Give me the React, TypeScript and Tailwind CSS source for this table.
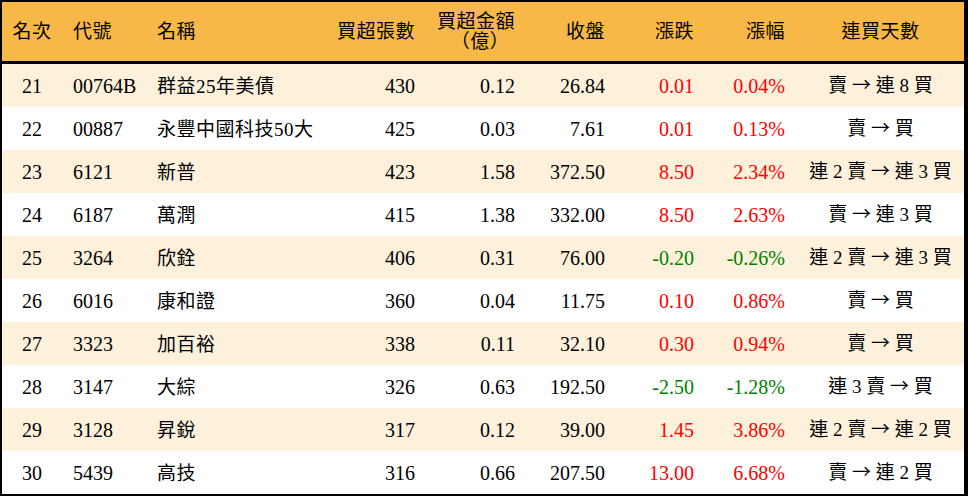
type Row = {
  rank: number;
  code: string;
  name: string;
  lots: number;
  amount: string;
  close: string;
  change: string;
  pct: string;
  streak: string;
};

const rows: Row[] = [
  { rank: 21, code: '00764B', name: '群益25年美債', lots: 430, amount: '0.12', close: '26.84', change: '0.01', pct: '0.04%', streak: '賣 → 連 8 買' },
  { rank: 22, code: '00887', name: '永豐中國科技50大', lots: 425, amount: '0.03', close: '7.61', change: '0.01', pct: '0.13%', streak: '賣 → 買' },
  { rank: 23, code: '6121', name: '新普', lots: 423, amount: '1.58', close: '372.50', change: '8.50', pct: '2.34%', streak: '連 2 賣 → 連 3 買' },
  { rank: 24, code: '6187', name: '萬潤', lots: 415, amount: '1.38', close: '332.00', change: '8.50', pct: '2.63%', streak: '賣 → 連 3 買' },
  { rank: 25, code: '3264', name: '欣銓', lots: 406, amount: '0.31', close: '76.00', change: '-0.20', pct: '-0.26%', streak: '連 2 賣 → 連 3 買' },
  { rank: 26, code: '6016', name: '康和證', lots: 360, amount: '0.04', close: '11.75', change: '0.10', pct: '0.86%', streak: '賣 → 買' },
  { rank: 27, code: '3323', name: '加百裕', lots: 338, amount: '0.11', close: '32.10', change: '0.30', pct: '0.94%', streak: '賣 → 買' },
  { rank: 28, code: '3147', name: '大綜', lots: 326, amount: '0.63', close: '192.50', change: '-2.50', pct: '-1.28%', streak: '連 3 賣 → 買' },
  { rank: 29, code: '3128', name: '昇銳', lots: 317, amount: '0.12', close: '39.00', change: '1.45', pct: '3.86%', streak: '連 2 賣 → 連 2 買' },
  { rank: 30, code: '5439', name: '高技', lots: 316, amount: '0.66', close: '207.50', change: '13.00', pct: '6.68%', streak: '賣 → 連 2 買' },
];

const cols = 'grid grid-cols-[60px_83px_185px_97px_100px_90px_89px_91px_1fr] items-center';

// arrow needs the CJK font so it comes out full width like the original
function Streak({ text }: { text: string }) {
  const parts = text.split('→');
  return (
    <div className="text-center whitespace-pre text-[19px]">
      {parts[0]}
      <span className="font-['Noto_Sans_CJK_TC',sans-serif]">→</span>
      {parts[1]}
    </div>
  );
}

export default function App() {
  return (
    <div className="w-[968px] h-[496px] bg-white text-black text-[20px] font-['Liberation_Serif','Noto_Sans_CJK_TC',serif]">
      <div className="h-full border-t-2 border-l-2 border-b-2 border-r-4 border-black flex flex-col">
        {/* header */}
        <div className={`${cols} h-[62px] shrink-0 bg-[#f8b848] border-b-[3px] border-black text-[19px] leading-[19px] tracking-[0.5px]`}>
          <div className="text-center">名次</div>
          <div className="pl-[11px]">代號</div>
          <div className="pl-[12px]">名稱</div>
          <div className="text-right pr-[12px]">買超張數</div>
          <div className="flex justify-end pr-[12px]">
            <div className="text-center leading-[20px]">
              <div>買超金額</div>
              <div className="pl-[8px]">（億）</div>
            </div>
          </div>
          <div className="text-right pr-[12px]">收盤</div>
          <div className="text-right pr-[12px]">漲跌</div>
          <div className="text-right pr-[12px]">漲幅</div>
          <div className="text-center">連買天數</div>
        </div>
        {/* rows */}
        {rows.map((r, i) => {
          const down = r.change.startsWith('-');
          const color = down ? 'text-[#008000]' : 'text-[#ff0000]';
          return (
            <div key={r.rank} className={`${cols} h-[43px] shrink-0 ${i % 2 === 0 ? 'bg-[#fdf1dc]' : 'bg-white'}`}>
              <div className="text-center">{r.rank}</div>
              <div className="pl-[11px]">{r.code}</div>
              <div className="pl-[12px] pt-[3px] text-[19px] tracking-[0.5px]">{r.name}</div>
              <div className="text-right pr-[12px]">{r.lots}</div>
              <div className="text-right pr-[12px]">{r.amount}</div>
              <div className="text-right pr-[12px]">{r.close}</div>
              <div className={`text-right pr-[12px] ${color}`}>{r.change}</div>
              <div className={`text-right pr-[12px] ${color}`}>{r.pct}</div>
              <Streak text={r.streak} />
            </div>
          );
        })}
      </div>
    </div>
  );
}
